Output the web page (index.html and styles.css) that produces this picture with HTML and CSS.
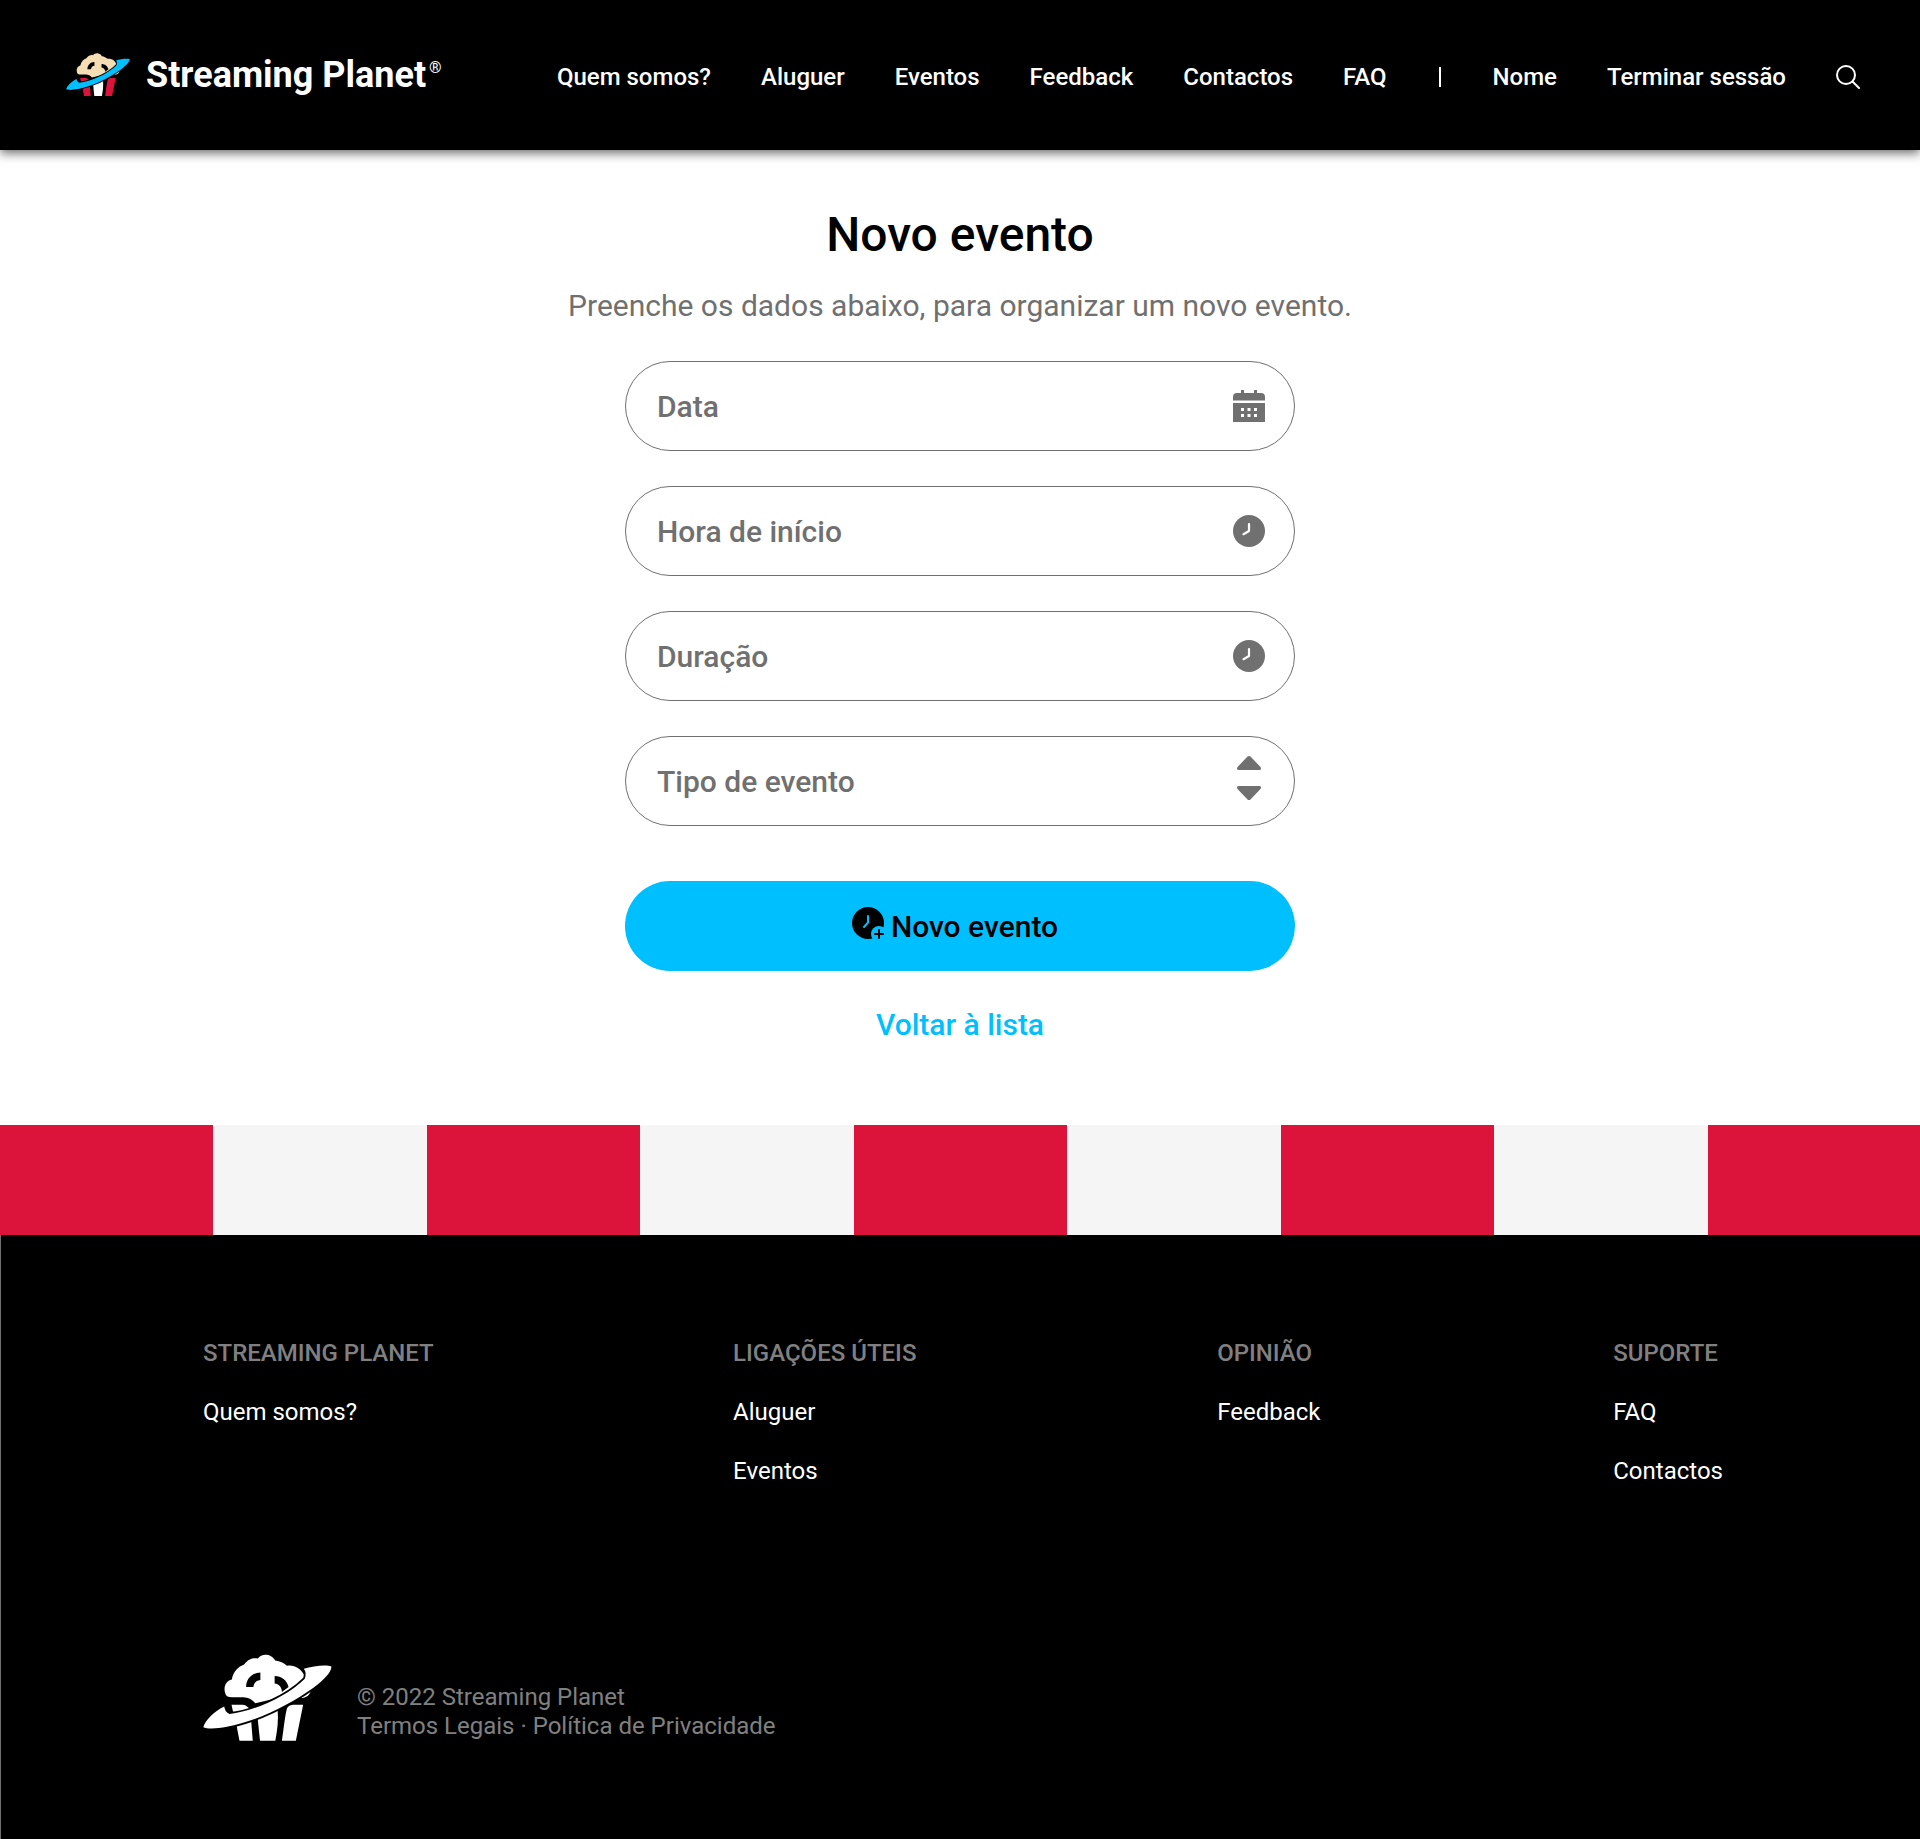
FILE: index.html
```html
<!DOCTYPE html>
<html lang="pt">
<head>
  <meta charset="utf-8">
  <meta name="viewport" content="width=device-width, initial-scale=1">
  <title>Novo evento - Streaming Planet</title>
  <link rel="stylesheet" href="styles.css">
</head>
<body>
  <svg class="sprite" aria-hidden="true">
    <symbol id="planet" viewBox="38 41 389 261">
      <path class="logo-corn" d="M106 162C98 142 106 121 125 117C129 93 145 78 162 72C174 55 190 51 203 54C214 38 243 37 256 60C270 62 282 67 291 76C313 72 336 86 345 108L343 125L364 148C361 164 350 173 332 173L318 160L196 189C186 178 174 171 160 171H125C114 171 108 168 106 162Z"/>
      <path class="logo-gap" d="M168 140C168 115 185 97 211 96V119C199 120 191 128 190 140ZM254 107C275 107 291 120 296 140L276 155C276 140 266 130 254 129Z"/>
      <path class="logo-side" d="M124 193H158C168 194 176 201 184 212L132 230ZM138 250L183 238L188 302H148ZM290 209C292 198 300 194 310 193H340L318 302H276C282 260 285 230 290 209Z"/>
      <path class="logo-mid" d="M203 236L263 206C266 240 262 270 256 302H210Z"/>
      <path class="logo-ring" d="M39 261C45 240 70 215 102 199C104 210 108 218 118 221C190 213 290 170 345 115C349 103 348 92 342 85C370 76 410 72 425 78C427 92 405 118 370 143C300 193 200 244 110 260C80 266 50 267 39 261Z"/>
    </symbol>
    <symbol id="clock" viewBox="0 0 32 32">
      <circle cx="16" cy="16" r="16" fill="currentColor"/>
      <path d="M16 9V16L10.500 19.200" fill="none" stroke="#fff" stroke-width="2.200" stroke-linecap="round" stroke-linejoin="round"/>
    </symbol>
  </svg>

  <header class="header">
    <a class="brand" href="#">
      <svg class="brand-logo" aria-hidden="true"><use href="#planet"/></svg>
      <span class="brand-name">Streaming Planet<sup>®</sup></span>
    </a>
    <nav class="nav" aria-label="Principal">
      <a href="#">Quem somos?</a>
      <a href="#">Aluguer</a>
      <a href="#">Eventos</a>
      <a href="#">Feedback</a>
      <a href="#">Contactos</a>
      <a href="#">FAQ</a>
      <span class="divider"></span>
      <a href="#">Nome</a>
      <a href="#">Terminar sessão</a>
      <button class="search" type="button" aria-label="Pesquisar">
        <svg viewBox="0 0 24 24" width="24" height="24" fill="none" stroke="currentColor" stroke-width="2" stroke-linecap="round"><circle cx="10" cy="10" r="9"/><path d="M16.500 16.500L23 23"/></svg>
      </button>
    </nav>
  </header>

  <main class="main">
    <h1 class="title">Novo evento</h1>
    <p class="subtitle">Preenche os dados abaixo, para organizar um novo evento.</p>
    <form class="form">
      <div class="field">
        <input type="text" placeholder="Data" aria-label="Data">
        <svg class="icon" viewBox="0 0 32 32" fill="currentColor" aria-hidden="true">
          <path d="M8 0h3v3h10V0h3v3h4a4 4 0 0 1 4 4v3.500H0V7a4 4 0 0 1 4-4h4z"/>
          <path fill-rule="evenodd" d="M0 13h32v19H0zM8 18v3h3v-3zM14.500 18v3h3v-3zM21 18v3h3v-3zM8 24v3h3v-3zM14.500 24v3h3v-3zM21 24v3h3v-3z"/>
        </svg>
      </div>
      <div class="field">
        <input type="text" placeholder="Hora de início" aria-label="Hora de início">
        <svg class="icon" aria-hidden="true"><use href="#clock"/></svg>
      </div>
      <div class="field">
        <input type="text" placeholder="Duração" aria-label="Duração">
        <svg class="icon" aria-hidden="true"><use href="#clock"/></svg>
      </div>
      <div class="field">
        <select aria-label="Tipo de evento"><option>Tipo de evento</option></select>
        <svg class="icon icon-tall" viewBox="0 0 32 50" fill="currentColor" aria-hidden="true">
          <path d="M14.500 .600Q16-.600 17.500 .600L27.500 11Q29 14 26 14H6Q3 14 4.500 11ZM14.500 43.400Q16 44.600 17.500 43.400L27.500 33Q29 30 26 30H6Q3 30 4.500 33Z"/>
        </svg>
      </div>
      <button class="submit" type="submit">
        <svg class="submit-icon" viewBox="0 0 32 38" aria-hidden="true">
          <circle cx="16" cy="16" r="16"/>
          <path class="hand" d="M16 9V15.500L12 20"/>
          <circle class="cut" cx="27" cy="27" r="8"/>
          <path class="plus" d="M27 23V31M23 27H31"/>
        </svg>
        Novo evento
      </button>
    </form>
    <a class="back" href="#">Voltar à lista</a>
  </main>

  <div class="stripes"></div>

  <footer class="footer">
    <div class="columns">
      <section>
        <h2>STREAMING PLANET</h2>
        <a href="#">Quem somos?</a>
      </section>
      <section>
        <h2>LIGAÇÕES ÚTEIS</h2>
        <a href="#">Aluguer</a>
        <a href="#">Eventos</a>
      </section>
      <section>
        <h2>OPINIÃO</h2>
        <a href="#">Feedback</a>
      </section>
      <section>
        <h2>SUPORTE</h2>
        <a href="#">FAQ</a>
        <a href="#">Contactos</a>
      </section>
    </div>
    <div class="legal">
      <svg class="legal-logo" aria-hidden="true"><use href="#planet"/></svg>
      <p>© 2022 Streaming Planet<br><a href="#">Termos Legais</a> · <a href="#">Política de Privacidade</a></p>
    </div>
  </footer>
</body>
</html>
```
FILE: styles.css
```css
* {
  box-sizing: border-box;
}

body {
  margin: 0;
  display: flex;
  flex-direction: column;
  min-height: 100vh;
  background: #fff;
  color: #000;
  font-family: Roboto, "Liberation Sans", sans-serif;
  font-size: 24px;
}

a {
  color: inherit;
  text-decoration: none;
}

h1, h2, p {
  margin: 0;
}

.sprite {
  position: absolute;
  width: 0;
  height: 0;
}

.header {
  display: flex;
  align-items: center;
  justify-content: space-between;
  height: 150px;
  padding: 0 60px 0 66px;
  background: #000;
  color: #fff;
  box-shadow: 0 3px 10px rgba(0, 0, 0, 0.6);
}

.brand {
  display: flex;
  align-items: center;
  gap: 16px;
  padding-bottom: 1px;
  font-size: 36px;
  font-weight: 700;
}

.brand-logo {
  width: 64px;
  height: 43px;
  --corn: #f5deb3;
  --side: #dc143c;
  --mid: #fff;
  --ring: #00bfff;
}

.brand-name sup {
  margin-left: 3px;
  font-size: 16px;
  font-weight: 400;
  line-height: 0;
  vertical-align: 14px;
}

.logo-corn { fill: var(--corn); }
.logo-side { fill: var(--side); }
.logo-mid { fill: var(--mid); }
.logo-gap { fill: #000; }

.logo-ring {
  fill: var(--ring);
  stroke: #000;
  stroke-width: 11px;
  paint-order: stroke;
}

.nav {
  display: flex;
  align-items: center;
  gap: 50px;
  padding-top: 4px;
  font-weight: 500;
}

.divider {
  width: 2px;
  height: 20px;
  margin: 0 2px;
  background: #fff;
}

.search {
  display: flex;
  padding: 0;
  border: 0;
  background: none;
  color: inherit;
}

.main {
  display: flex;
  flex-direction: column;
  align-items: center;
  padding: 57px 20px 82px;
}

.title {
  font-size: 48px;
  font-weight: 500;
  line-height: 56px;
}

.subtitle {
  margin: 25px 0 37px;
  color: #707070;
  font-size: 30px;
  line-height: 36px;
}

.form {
  display: flex;
  flex-direction: column;
  gap: 35px;
  width: 100%;
  max-width: 670px;
}

.field {
  display: flex;
  align-items: center;
  height: 90px;
  padding: 0 29px 0 31px;
  border: 1px solid #707070;
  border-radius: 45px;
  color: #707070;
}

.field input,
.field select {
  flex: 1;
  min-width: 0;
  height: 100%;
  padding: 0;
  border: 0;
  outline: 0;
  appearance: none;
  background: none;
  color: inherit;
  font: inherit;
  font-size: 30px;
  font-weight: 500;
}

.field input::placeholder {
  color: inherit;
  opacity: 1;
}

.icon {
  width: 32px;
  height: 32px;
}

.icon-tall {
  height: 50px;
}

.submit {
  display: flex;
  align-items: center;
  justify-content: center;
  gap: 7px;
  height: 90px;
  margin-top: 20px;
  padding: 0 10px 0 0;
  border: 0;
  border-radius: 45px;
  background: #00bfff;
  color: #000;
  font: inherit;
  font-size: 30px;
  font-weight: 500;
}

.submit-icon {
  width: 32px;
  height: 38px;
}

.hand,
.plus {
  fill: none;
  stroke: #00bfff;
  stroke-width: 2px;
  stroke-linecap: round;
  stroke-linejoin: round;
}

.plus {
  stroke: #000;
}

.cut {
  fill: #00bfff;
}

.back {
  margin-top: 36px;
  color: #00bfff;
  font-size: 30px;
  font-weight: 500;
  line-height: 36px;
}

.stripes {
  height: 110px;
  background: repeating-linear-gradient(90deg, #dc143c 0 213px, #f5f5f5 213px 427px);
}

.footer {
  flex: 1;
  padding: 103px 197px 96px 202px;
  border-left: 1px solid #707070;
  background: #000;
  color: #fff;
}

.columns {
  display: grid;
  grid-template-columns: 530fr 484fr 396fr auto;
}

.columns section {
  display: flex;
  flex-direction: column;
  align-items: flex-start;
  gap: 29px;
  line-height: 30px;
}

.columns h2 {
  color: #808080;
  font-size: 24px;
  font-weight: 500;
}

.legal {
  display: flex;
  align-items: flex-end;
  gap: 25px;
  margin-top: 168px;
  color: #808080;
  line-height: 29px;
}

.legal-logo {
  width: 129px;
  height: 87px;
  --corn: #fff;
  --side: #fff;
  --mid: #fff;
  --ring: #fff;
}
```
